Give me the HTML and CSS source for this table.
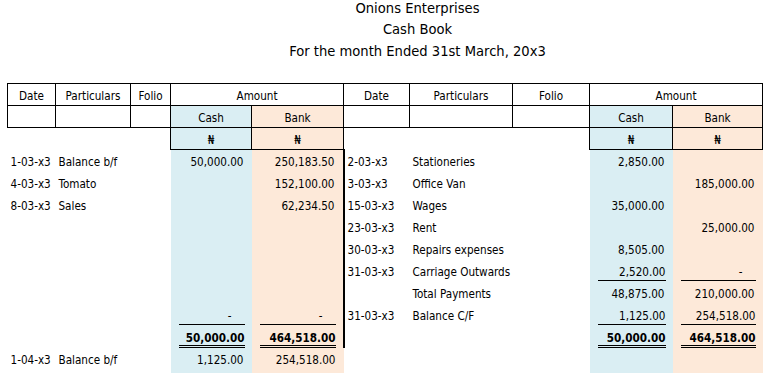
FILE: index.html
```html
<!DOCTYPE html>
<html>
<head>
<meta charset="utf-8">
<link rel="stylesheet" href="styles.css">
</head>
<body>
<div class="page">
  <div class="title">
    <div class="title-line">Onions Enterprises</div>
    <div class="title-line">Cash Book</div>
    <div class="title-line">For the month Ended 31st March, 20x3</div>
  </div>
  <table class="book">
    <colgroup>
      <col class="w-date"><col class="w-part"><col class="w-folio"><col class="w-cash"><col class="w-bank">
      <col class="w-rdate"><col class="w-rpart"><col class="w-rfolio"><col class="w-rcash"><col class="w-rbank">
    </colgroup>
    <tr class="hrow">
      <th>Date</th><th>Particulars</th><th>Folio</th><th colspan="2">Amount</th>
      <th>Date</th><th>Particulars</th><th>Folio</th><th colspan="2">Amount</th>
    </tr>
    <tr class="hrow">
      <th></th><th></th><th></th><th class="cash">Cash</th><th class="bank">Bank</th>
      <th></th><th></th><th></th><th class="cash">Cash</th><th class="bank">Bank</th>
    </tr>
    <tr class="hrow naira-row">
      <td class="blank"></td><td class="blank"></td><td class="blank"></td><th class="cash">₦</th><th class="bank">₦</th>
      <td class="blank"></td><td class="blank"></td><td class="blank"></td><th class="cash">₦</th><th class="bank">₦</th>
    </tr>
    <tr>
      <td>1-03-x3</td><td>Balance b/f</td><td></td><td class="cash num">50,000.00</td><td class="bank num">250,183.50</td>
      <td class="sep">2-03-x3</td><td>Stationeries</td><td></td><td class="cash num">2,850.00</td><td class="bank num"></td>
    </tr>
    <tr>
      <td>4-03-x3</td><td>Tomato</td><td></td><td class="cash num"></td><td class="bank num">152,100.00</td>
      <td class="sep">3-03-x3</td><td>Office Van</td><td></td><td class="cash num"></td><td class="bank num">185,000.00</td>
    </tr>
    <tr>
      <td>8-03-x3</td><td>Sales</td><td></td><td class="cash num"></td><td class="bank num">62,234.50</td>
      <td class="sep">15-03-x3</td><td>Wages</td><td></td><td class="cash num">35,000.00</td><td class="bank num"></td>
    </tr>
    <tr>
      <td></td><td></td><td></td><td class="cash num"></td><td class="bank num"></td>
      <td class="sep">23-03-x3</td><td>Rent</td><td></td><td class="cash num"></td><td class="bank num">25,000.00</td>
    </tr>
    <tr>
      <td></td><td></td><td></td><td class="cash num"></td><td class="bank num"></td>
      <td class="sep">30-03-x3</td><td>Repairs expenses</td><td></td><td class="cash num">8,505.00</td><td class="bank num"></td>
    </tr>
    <tr>
      <td></td><td></td><td></td><td class="cash num"></td><td class="bank num"></td>
      <td class="sep">31-03-x3</td><td>Carriage Outwards</td><td></td>
      <td class="cash num"><div class="ul">2,520.00</div></td>
      <td class="bank num"><div class="ul"><span class="dash">-</span></div></td>
    </tr>
    <tr>
      <td></td><td></td><td></td><td class="cash num"></td><td class="bank num"></td>
      <td class="sep"></td><td>Total Payments</td><td></td><td class="cash num">48,875.00</td><td class="bank num">210,000.00</td>
    </tr>
    <tr>
      <td></td><td></td><td></td>
      <td class="cash num"><div class="ul"><span class="dash">-</span></div></td>
      <td class="bank num"><div class="ul"><span class="dash">-</span></div></td>
      <td class="sep">31-03-x3</td><td>Balance C/F</td><td></td>
      <td class="cash num"><div class="ul">1,125.00</div></td>
      <td class="bank num"><div class="ul">254,518.00</div></td>
    </tr>
    <tr>
      <td></td><td></td><td></td>
      <td class="cash num"><div class="dul">50,000.00</div></td>
      <td class="bank num"><div class="dul">464,518.00</div></td>
      <td class="sep"></td><td></td><td></td>
      <td class="cash num"><div class="dul">50,000.00</div></td>
      <td class="bank num"><div class="dul">464,518.00</div></td>
    </tr>
    <tr>
      <td>1-04-x3</td><td>Balance b/f</td><td></td><td class="cash num">1,125.00</td><td class="bank num">254,518.00</td>
      <td></td><td></td><td></td><td class="cash num"></td><td class="bank num"></td>
    </tr>
    <tr class="tail">
      <td></td><td></td><td></td><td class="cash"></td><td class="bank"></td>
      <td></td><td></td><td></td><td class="cash"></td><td class="bank"></td>
    </tr>
  </table>
</div>
</body>
</html>
```
FILE: styles.css
```css
html, body {
  margin: 0;
  padding: 0;
  background: #ffffff;
  overflow: hidden;
}
body {
  font-family: "DejaVu Sans Condensed", "DejaVu Sans", sans-serif;
  color: #000000;
}
.page {
  padding: 0 0 0 7px;
}
.title {
  margin-left: 66px;
  width: 689px;
  text-align: center;
  font-size: 14.6px;
  height: 83px;
}
.title-line {
  height: 21.3px;
  line-height: 16px;
}
.book {
  border-collapse: collapse;
  table-layout: fixed;
  width: 756px;
  font-size: 11.6px;
}
.w-date { width: 48px; }
.w-part { width: 75px; }
.w-folio { width: 40px; }
.w-cash { width: 81px; }
.w-bank { width: 92px; }
.w-rdate { width: 66px; }
.w-rpart { width: 103px; }
.w-rfolio { width: 77px; }
.w-rcash { width: 83px; }
.w-rbank { width: 90px; }
.book tr {
  height: 22px;
}
.book tr.tail {
  height: 4px;
}
.book tr.tail td {
  padding: 0;
  line-height: 0;
}
.book th, .book td {
  padding: 0 3px 3px 3px;
  vertical-align: bottom;
  white-space: nowrap;
  overflow: visible;
  line-height: 14px;
  text-align: left;
  font-weight: normal;
}
.hrow th {
  border: 1px solid #000000;
  text-align: center;
  padding: 0 2px 2px 2px;
}
.naira-row td.blank {
  border: none;
  border-top: 1px solid #000000;
}
.cash { background: #DAEEF3; }
.bank { background: #FDE9D9; }
.book td.num {
  text-align: right;
  padding-right: 8px;
  padding-left: 8px;
}
.book td.sep {
  border-left: 2px solid #000000;
}
.ul {
  border-bottom: 1px solid #000000;
  margin-right: -1px;
  margin-bottom: -2px;
  padding-bottom: 1px;
}
.dul {
  border-bottom: 3px double #000000;
  font-weight: bold;
  margin-right: -1px;
  margin-bottom: -3px;
  padding-bottom: 0;
}
.dash {
  padding-right: 13px;
}
```
